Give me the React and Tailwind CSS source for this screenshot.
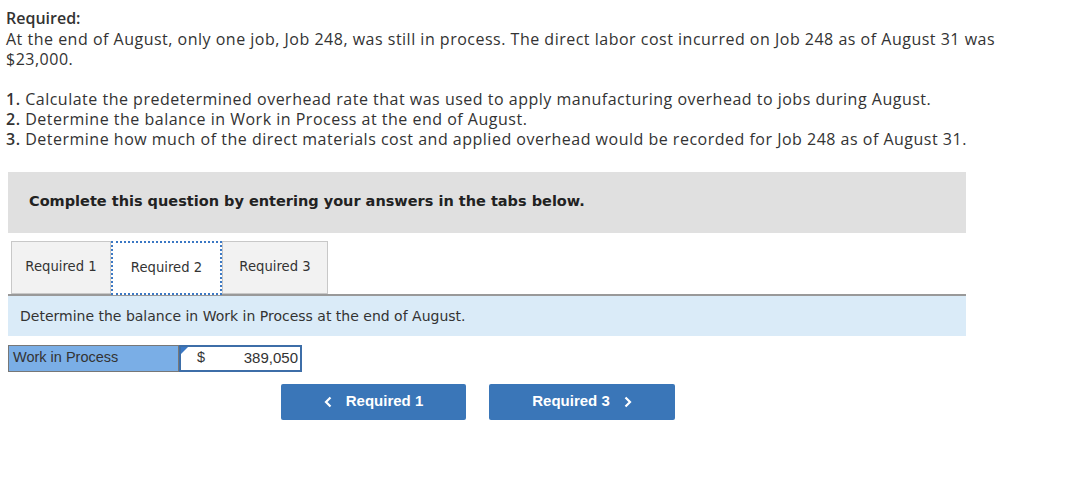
import React from 'react'

const Tab = ({ label, active, width }) => (
  <div
    className={
      active
        ? 'relative z-10 -mb-[2px] flex h-[54px] items-center justify-center border-2 border-dotted border-[#3b78c4] bg-white ' + width
        : 'flex h-[53px] items-center justify-center border border-[#c8c8c8] bg-[#f2f2f2] ' + width
    }
  >
    <span className="text-[13.2px] text-[#333]">{label}</span>
  </div>
)

export default function App() {
  return (
    <div className="min-h-[500px] bg-white text-[#333]">
      <div className="px-[6px] pt-[8px] font-['Open_Sans',sans-serif] text-[16px] leading-[20.5px] tracking-[0.5px] text-[#333]">
        <p className="font-semibold tracking-normal">Required:</p>
        <p>
          At the end of August, only one job, Job 248, was still in process. The direct labor cost incurred on Job 248 as of August 31 was
          <br />
          $23,000.
        </p>
        <div className="mt-[19px] leading-[20px]">
          <p>
            <b className="font-semibold">1.</b> Calculate the predetermined overhead rate that was used to apply manufacturing overhead to jobs during August.
          </p>
          <p>
            <b className="font-semibold">2.</b> Determine the balance in Work in Process at the end of August.
          </p>
          <p>
            <b className="font-semibold">3.</b> Determine how much of the direct materials cost and applied overhead would be recorded for Job 248 as of August 31.
          </p>
        </div>
      </div>

      <div className="ml-[8px] w-[958px] font-['DejaVu_Sans',sans-serif]">
        <div className="mt-[23px] flex h-[61px] items-center bg-[#e0e0e0] pl-[21px]">
          <p className="text-[14.5px] font-bold text-[#222]">
            Complete this question by entering your answers in the tabs below.
          </p>
        </div>

        <div className="mt-[8px] flex pl-[3px]">
          <Tab label="Required 1" width="w-[100px]" />
          <Tab label="Required 2" width="w-[111px]" active />
          <Tab label="Required 3" width="w-[106px]" />
        </div>

        <div className="border-t-2 border-[#999] bg-[#daebf8] pb-[10px] pl-[12px] pt-[10px]">
          <p className="text-[14px] leading-[20px] text-[#333]">
            Determine the balance in Work in Process at the end of August.
          </p>
        </div>
      </div>

      <div className="ml-[8px] mt-[9px] flex font-['Liberation_Sans',sans-serif] text-[14.5px]">
        <div className="flex h-[27px] w-[171px] items-center border border-[#777] bg-[#7aaee6] pl-[4px] text-[#333]">
          Work in Process
        </div>
        <div className="relative flex h-[27px] w-[123px] items-center border-2 border-[#3d6ea8] bg-white pr-[2px] text-[#333]">
          <span className="absolute left-0 top-0 h-0 w-0 border-r-[7px] border-t-[7px] border-r-transparent border-t-[#3b78c4]"></span>
          <span className="ml-[16px]">$</span>
          <span className="ml-auto text-[15px]">389,050</span>
        </div>
      </div>

      <div className="ml-[281px] mt-[12px] flex gap-[23px] font-['Liberation_Sans',sans-serif] text-[15px] font-bold text-white">
        <div className="flex h-[36px] w-[185px] items-center justify-center gap-[14px] rounded-[2px] bg-[#3a76b8]">
          <svg width="8" height="12" viewBox="0 0 8 12" fill="none">
            <path d="M6.5 1.5L2 6l4.5 4.5" stroke="white" strokeWidth="2.2" />
          </svg>
          <span>Required 1</span>
        </div>
        <div className="flex h-[36px] w-[186px] items-center justify-center gap-[14px] rounded-[2px] bg-[#3a76b8]">
          <span>Required 3</span>
          <svg width="8" height="12" viewBox="0 0 8 12" fill="none">
            <path d="M1.5 1.5L6 6l-4.5 4.5" stroke="white" strokeWidth="2.2" />
          </svg>
        </div>
      </div>
    </div>
  )
}
